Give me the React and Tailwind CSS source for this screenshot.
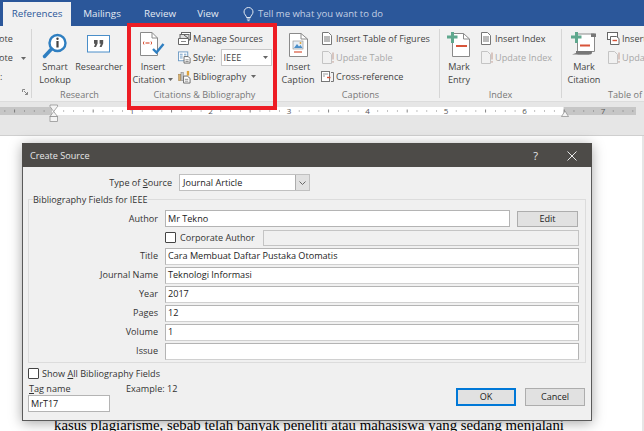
import React from "react";

const font = { fontFamily: '"Open Sans", "Noto Sans", sans-serif' };

const SmartIcon = () => (
  <svg width="26" height="26" viewBox="0 0 26 26">
    <circle cx="15.5" cy="10" r="8" fill="#fff" stroke="#2f7fc1" strokeWidth="2.4" />
    <path d="M9.5 16L2.5 23.5" stroke="#2f7fc1" strokeWidth="3.4" strokeLinecap="round" />
    <circle cx="15.5" cy="5.7" r="1.2" fill="#444" />
    <rect x="14.4" y="8" width="2.2" height="6.5" fill="#444" />
  </svg>
);

const ResearcherIcon = () => (
  <svg width="24" height="18" viewBox="0 0 24 18">
    <rect x="0.5" y="0.5" width="22" height="16.5" fill="#fff" stroke="#4a8ec9" />
    <path d="M7 5h3.6v3.5L9 12H7l1.2-3.2H7ZM12.6 5h3.6v3.5L14.6 12h-2l1.2-3.2h-1.2Z" fill="#555" />
  </svg>
);

const CitationIcon = () => (
  <svg width="28" height="25" viewBox="0 0 28 25">
    <path d="M1.5 0.5H13L18.5 6V23.5H1.5Z" fill="#fff" stroke="#8a8a8a" />
    <path d="M13 0.5V6H18.5" fill="none" stroke="#8a8a8a" />
    <path d="M5 9.5Q3.6 11 5 12.5M12 9.5Q13.4 11 12 12.5" fill="none" stroke="#d8543a" strokeWidth="1" />
    <path d="M6.5 11H10.5" stroke="#d8543a" strokeWidth="1.2" />
    <path d="M14 17L17.5 20.5L24.5 12" fill="none" stroke="#2f7fc1" strokeWidth="2.4" />
  </svg>
);

const ManageIcon = () => (
  <svg width="13" height="13" viewBox="0 0 13 13">
    <rect x="3.5" y="0.5" width="9" height="7" fill="#fff" stroke="#666" />
    <rect x="2" y="2.5" width="9" height="6" fill="#ddd" stroke="#666" />
    <path d="M0.5 6.5H10.5V12.5H0.5Z" fill="#fff" stroke="#666" />
    <path d="M3 9.5H8" stroke="#888" />
    <path d="M6 3L10 6" stroke="#555" />
  </svg>
);

const StyleIcon = () => (
  <svg width="14" height="13" viewBox="0 0 14 13">
    <rect x="0.5" y="0.5" width="10" height="9.5" fill="#fff" stroke="#6d9ac4" />
    <path d="M2 3H5M2 5H5M2 7H5M6.5 3H9M6.5 5H9" stroke="#6d9ac4" />
    <path d="M6.5 5.5H11L13 7.5V12.5H6.5Z" fill="#fff" stroke="#666" />
    <path d="M8 9H11.5M8 10.8H11.5" stroke="#888" />
  </svg>
);

const BibIcon = () => (
  <svg width="14" height="14" viewBox="0 0 14 14">
    <rect x="0.5" y="4" width="2.5" height="7" fill="#d9b26f" stroke="#9a7b45" strokeWidth="0.5" />
    <rect x="3.2" y="2" width="2.5" height="9" fill="#c8c8c8" stroke="#777" strokeWidth="0.5" />
    <rect x="9.5" y="0.5" width="2.5" height="5" fill="#e0a43a" />
    <path d="M6 6H10L13 8.5V13.5H6Z" fill="#fff" stroke="#666" />
    <path d="M7.5 9.5H11M7.5 11.5H11" stroke="#888" />
  </svg>
);

const CaptionIcon = () => (
  <svg width="19" height="24" viewBox="0 0 19 24">
    <path d="M0.5 0.5H12L18.5 6V23.5H0.5Z" fill="#fff" stroke="#8a8a8a" />
    <path d="M12 0.5V6H18.5" fill="none" stroke="#8a8a8a" />
    <rect x="4" y="8" width="10" height="8" fill="#e8eef5" stroke="#888" strokeWidth="0.6" />
    <path d="M5 15L8 11L10 13.5L11.5 12L13.5 15Z" fill="#4a8ec9" />
    <circle cx="11.5" cy="10" r="1" fill="#e0a43a" />
    <path d="M5 19H13" stroke="#d8543a" strokeWidth="1.2" />
  </svg>
);

const ListIcon = ({ disabled }) => {
  const c = disabled ? "#c4c4c4" : "#777";
  return (
    <svg width="13" height="13" viewBox="0 0 13 13">
      <path d="M1.5 0.5H7.5L10.5 3.5V12.5H1.5Z" fill={disabled ? "#f1f1f1" : "#fff"} stroke={c} />
      {disabled ? (
        <path d="M12 1.5V8.5M12 10V11.8" stroke="#c9a9a0" strokeWidth="1.2" />
      ) : (
        <path d="M3 5H9M3 7H9M3 9H9" stroke={c} />
      )}
    </svg>
  );
};

const CrossIcon = () => (
  <svg width="13" height="13" viewBox="0 0 13 13">
    <rect x="0.5" y="1.5" width="8" height="10" fill="#fff" stroke="#777" />
    <path d="M2 4H7M2 6H4" stroke="#999" />
    <path d="M6 7.5H9.5" stroke="#d8543a" strokeWidth="1.4" />
    <path d="M10 2.5H12.5V11.5H10" fill="none" stroke="#777" />
  </svg>
);

const MarkEntryIcon = () => (
  <svg width="25" height="25" viewBox="0 0 25 25">
    <path d="M5.5 1.5H16.5L22.5 7V24.5H5.5Z" fill="#fff" stroke="#8a8a8a" />
    <path d="M16.5 1.5V7H22.5" fill="none" stroke="#8a8a8a" />
    <path d="M4 0H7V3.5H10.5V6.5H7V11H4V6.5H0V3.5H4Z" fill="#5fa88e" />
    <rect x="9" y="13" width="11" height="2" fill="#d8543a" />
  </svg>
);

const MarkCitationIcon = () => (
  <svg width="26" height="25" viewBox="0 0 26 25">
    <path d="M6.5 2H23.5V19.5H18V22H6.5Z" fill="#fff" stroke="#8a8a8a" />
    <path d="M1 22.5H19Q21 22.5 21 20.5V19H5V21Z" fill="#777" />
    <path d="M20 1.5H25V5H20Z" fill="#777" />
    <path d="M4 0H7V3.5H10.5V6.5H7V11H4V6.5H0V3.5H4Z" fill="#5fa88e" />
    <rect x="9" y="12.5" width="10" height="2" fill="#d8543a" />
  </svg>
);

const TableAuthIcon = () => (
  <svg width="13" height="13" viewBox="0 0 13 13">
    <rect x="0.5" y="0.5" width="10" height="7" fill="#fff" stroke="#666" />
    <path d="M3.5 4.5H9.5L12 6.5V12.5H3.5Z" fill="#fff" stroke="#666" />
    <path d="M5.5 8.5H10" stroke="#d8543a" strokeWidth="1.4" />
  </svg>
);

const Caret = () => (
  <svg width="5" height="3" viewBox="0 0 5 3" className="ml-[3px] inline-block shrink-0">
    <path d="M0 0H5L2.5 3Z" fill="#666" />
  </svg>
);

const Sep = () => <div className="w-px h-[69px] bg-[#d6d6d6] shrink-0" />;

const Large = ({ w, icon, lines, caret }) => (
  <div className="flex flex-col items-center shrink-0" style={{ width: w }}>
    <div className="h-[31px] flex items-start justify-center">{icon}</div>
    {lines.map((l, i) => (
      <div key={l} className="h-[13px] leading-[13px] text-[9.1px] text-[#444] whitespace-nowrap flex items-center">
        {l}
        {caret && i === lines.length - 1 ? <Caret /> : null}
      </div>
    ))}
  </div>
);

const Small = ({ icon, label, disabled, caret }) => (
  <div className={`h-[19px] flex items-center gap-[2px] text-[9.1px] whitespace-nowrap ${disabled ? "text-[#a8a8a8]" : "text-[#444]"}`}>
    <span className="w-[13px] h-[14px] flex items-center justify-center shrink-0">{icon}</span>
    {label}
    {caret ? <Caret /> : null}
  </div>
);

const Group = ({ width, label, labelPad = 0, children }) => (
  <div className="shrink-0 flex flex-col h-[72px]" style={{ width }}>
    <div className="h-[60px] flex">{children}</div>
    <div className="h-[12px] leading-[12px] text-[9.1px] text-[#777] text-center whitespace-nowrap" style={{ paddingLeft: labelPad }}>
      {label}
    </div>
  </div>
);

const Ruler = () => {
  const nums = [1, 2, 3, 4, 5, 6, 7];
  const inch = 78.5;
  const zero = 53.5;
  const ticks = [];
  for (let n = -6; n < 64; n++) ticks.push(n);
  return (
    <svg width="644" height="21" viewBox="0 0 644 21" className="block">
      <rect x="0" y="5" width="52" height="8" fill="#c6c6c6" />
      <rect x="52" y="5" width="511" height="8" fill="#fff" />
      <rect x="564" y="5" width="72" height="8" fill="#c6c6c6" />
      {ticks.map((n) => {
        const x = zero + (n * inch) / 8;
        if (n % 8 === 0 || x > 636) return null;
        if (n % 4 === 0) return <rect key={n} x={x} y="7.5" width="0.8" height="3" fill="#666" />;
        return <rect key={n} x={x} y="8.5" width="0.8" height="1" fill="#666" />;
      })}
      {nums.map((n) => (
        <text key={n} x={zero + n * inch} y="12" textAnchor="middle" fontSize="8" fill="#555" fontFamily="Open Sans, sans-serif">
          {n}
        </text>
      ))}
      <path d="M50 3H57.5V4.5L53.7 9.5L50 4.5Z" fill="#f4f4f4" stroke="#888" strokeWidth="0.7" />
      <path d="M53.7 9.5L57.5 14.5H50Z" fill="#f4f4f4" stroke="#888" strokeWidth="0.7" />
      <rect x="50" y="14.5" width="7.5" height="5" fill="#f4f4f4" stroke="#888" strokeWidth="0.7" />
      <path d="M565 9L568.5 14.5H561.5Z" fill="#f4f4f4" stroke="#888" strokeWidth="0.7" />
    </svg>
  );
};

const Field = ({ label, value }) => (
  <div className="flex items-center h-[17px] mb-[2px]">
    <div className="w-[129px] pb-[1px] text-right text-[9.1px] text-[#333] whitespace-nowrap">{label}</div>
    <div className="ml-[7px] w-[414px] h-[17px] pb-[1px] bg-white border border-[#b4b4b4] border-b-[#d0d0d0] flex items-center pl-[2px] text-[9.1px] text-[#222]">
      {value}
    </div>
  </div>
);

const Box = () => <div className="w-[11px] h-[11px] bg-white border border-[#444] rounded-[1px] shrink-0" />;

export default function App() {
  return (
    <div className="relative w-[644px] h-[431px] overflow-hidden bg-[#e6e6e6]" style={font}>
      {/* title tabs */}
      <div className="h-[26px] bg-[#2b579a] flex items-end text-[9.8px] text-[#e4eaf3] whitespace-nowrap">
        <div className="ml-[3px] w-[68px] h-[24px] bg-[#f1f1f1] text-[#2b579a] flex items-center justify-center">References</div>
        <div className="w-[62px] h-[24px] flex items-center justify-center">Mailings</div>
        <div className="w-[54px] h-[24px] flex items-center justify-center">Review</div>
        <div className="w-[42px] h-[24px] flex items-center justify-center">View</div>
        <div className="ml-[14px] h-[24px] flex items-center text-[#c3d0e4] text-[9.5px]">
          <svg width="11" height="15" viewBox="0 0 11 15" className="mr-[4px]">
            <path d="M3.5 10.5C3.5 8.5 1 7.5 1 5A4.5 4.5 0 0 1 10 5C10 7.5 7.5 8.5 7.5 10.5Z" fill="none" stroke="#e4eaf3" strokeWidth="1" />
            <path d="M3.8 12H7.2M4.5 13.7H6.5" stroke="#e4eaf3" />
          </svg>
          Tell me what you want to do
        </div>
      </div>

      {/* ribbon */}
      <div className="h-[75px] bg-[#f1f1f1] pt-[3px] flex overflow-hidden">
        <div className="w-[31px] shrink-0 flex flex-col relative">
          <div className="h-[19px] flex items-center text-[9.1px] text-[#444] -ml-[1px]">ote</div>
          <div className="h-[19px] flex items-center text-[9.1px] text-[#444] -ml-[1px]">
            ote <span className="ml-[5px]"><Caret /></span>
          </div>
          <div className="h-[19px] flex items-center text-[9.1px] text-[#444]">:</div>
          <svg width="6" height="6" viewBox="0 0 6 6" className="ml-[22px] mt-[3px]">
            <path d="M0.5 0.5H3M0.5 0.5V3" stroke="#888" />
            <path d="M2 2L5.5 5.5M5.5 3V5.5H3" stroke="#888" fill="none" />
          </svg>
        </div>
        <Sep />
        <Group width={95} label="Research">
          <div className="w-[1px]" />
          <Large w={44} icon={<div className="pt-[4px]"><SmartIcon /></div>} lines={["Smart", "Lookup"]} />
          <Large w={44} icon={<div className="pt-[6px]"><ResearcherIcon /></div>} lines={["Researcher"]} />
        </Group>
        <Group width={155} label="Citations & Bibliography">
          <div className="w-[4px]" />
          <Large w={44} icon={<div className="pt-[3px]"><CitationIcon /></div>} lines={["Insert", "Citation"]} caret />
          <div className="ml-[3px] flex flex-col">
            <Small icon={<ManageIcon />} label="Manage Sources" />
            <div className="h-[19px] flex items-center gap-[2px] text-[9.1px] text-[#444]">
              <span className="w-[13px] flex items-center justify-center"><StyleIcon /></span>
              Style:
              <div className="w-[51px] h-[17px] ml-[3px] bg-white border border-[#c8c8c8] flex items-center justify-between pl-[2px] pr-[3px]">
                IEEE
                <Caret />
              </div>
            </div>
            <Small icon={<BibIcon />} label="Bibliography" caret />
          </div>
        </Group>
        <Group width={157} label="Captions">
          <Large w={32} icon={<div className="pt-[4px]"><CaptionIcon /></div>} lines={["Insert", "Caption"]} />
          <div className="ml-[7px] flex flex-col">
            <Small icon={<ListIcon />} label="Insert Table of Figures" />
            <Small icon={<ListIcon disabled />} label="Update Table" disabled />
            <Small icon={<CrossIcon />} label="Cross-reference" />
          </div>
        </Group>
        <Sep />
        <Group width={121} label="Index">
          <Large w={38} icon={<div className="pt-[3px]"><MarkEntryIcon /></div>} lines={["Mark", "Entry"]} />
          <div className="ml-[2px] flex flex-col">
            <Small icon={<ListIcon />} label="Insert Index" />
            <Small icon={<ListIcon disabled />} label="Update Index" disabled />
          </div>
        </Group>
        <Sep />
        <Group width={90} label="Table of" labelPad={36}>
          <Large w={44} icon={<div className="pt-[3px]"><MarkCitationIcon /></div>} lines={["Mark", "Citation"]} />
          <div className="ml-[1px] flex flex-col">
            <Small icon={<TableAuthIcon />} label="Insert" />
            <Small icon={<ListIcon disabled />} label="Update" disabled />
          </div>
        </Group>
      </div>

      {/* ruler band */}
      <div className="h-[35px] bg-[#e6e6e6] border-t border-[#dcdcdc] border-b border-b-[#cfcfcf]">
        <Ruler />
      </div>

      {/* page */}
      <div className="relative w-[642px] h-[295px] bg-white">
        <div className="pt-[281px] pl-[54px] text-[14.8px] leading-[16px] text-black whitespace-nowrap" style={{ fontFamily: '"Liberation Serif", serif' }}>
          kasus plagiarisme, sebab telah banyak peneliti atau mahasiswa yang sedang menjalani
        </div>
      </div>

      {/* dialog */}
      <div className="absolute left-[22px] top-[143px] w-[570px] h-[278px] bg-[#f0f0f0] border border-[#5a5a5a] border-t-0 shadow-[0_2px_12px_rgba(0,0,0,0.35)]">
        <div className="h-[24px] bg-[#4d4b48] -mx-px flex items-center justify-between text-[9.1px] text-[#e8e8e8] pl-[8px] pt-[2px]">
          <span>Create Source</span>
          <div className="flex items-center">
            <span className="text-[11px] mr-[29px]">?</span>
            <svg width="10" height="10" viewBox="0 0 10 10" className="mr-[15px]">
              <path d="M0.5 0.5L9.5 9.5M9.5 0.5L0.5 9.5" stroke="#e8e8e8" strokeWidth="1" />
            </svg>
          </div>
        </div>

        <div className="pt-[7px] flex items-center h-[24px]">
          <div className="w-[149px] text-right text-[9.1px] text-[#333] whitespace-nowrap">
            Type of <u>S</u>ource
          </div>
          <div className="ml-[7px] w-[131px] h-[17px] bg-white border border-[#c0c0c0] flex items-center justify-between pl-[3px] text-[9.1px] text-[#222]">
            Journal Article
            <div className="w-[14px] h-full bg-[#e1e1e1] border-l border-[#adadad] flex items-center justify-center">
              <svg width="7" height="4" viewBox="0 0 7 4"><path d="M0.5 0.5L3.5 3.5L6.5 0.5" fill="none" stroke="#666" /></svg>
            </div>
          </div>
        </div>

        <div className="relative mt-[8px] ml-[5px] w-[558px] h-[164px] border border-[#dcdcdc] pt-[10px]">
          <div className="absolute -top-[7px] left-[4px] bg-[#f0f0f0] text-[9.1px] leading-[13px] text-[#333] whitespace-nowrap">Bibliography Fields for IEEE</div>
          <div className="flex items-center h-[17px] mb-[2px]">
            <div className="w-[129px] text-right text-[9.1px] text-[#333]">Author</div>
            <div className="ml-[7px] w-[345px] h-[17px] bg-white border border-[#b4b4b4] flex items-center pl-[2px] text-[9.1px] text-[#222]">Mr Tekno</div>
            <div className="ml-[7px] w-[61px] h-[16px] bg-[#e1e1e1] border border-[#adadad] flex items-center justify-center text-[9.1px] text-[#222]">Edit</div>
          </div>
          <div className="flex items-center h-[17px] mb-[2px]">
            <div className="ml-[136px]"><Box /></div>
            <div className="ml-[4px] w-[83px] text-[9.1px] text-[#333] whitespace-nowrap">Corporate Author</div>
            <div className="w-[316px] h-[16px] bg-[#f0f0f0] border border-[#c4c4c4]" />
          </div>
          <Field label="Title" value="Cara Membuat Daftar Pustaka Otomatis" />
          <Field label="Journal Name" value="Teknologi Informasi" />
          <Field label="Year" value="2017" />
          <Field label="Pages" value="12" />
          <Field label="Volume" value="1" />
          <Field label="Issue" value="" />
        </div>

        <div className="mt-[5px] ml-[5px] flex items-center gap-[3px] text-[9.1px] text-[#333] h-[11px]">
          <Box />
          <span>Show <u>A</u>ll Bibliography Fields</span>
        </div>
        <div className="flex justify-between items-start">
          <div className="ml-[5px]">
            <div className="mt-[3px] flex text-[9.1px] leading-[13px] text-[#333]">
              <span className="w-[98px] pl-[1px]"><u>T</u>ag name</span>
              <span>Example: 12</span>
            </div>
            <div className="w-[82px] h-[17px] bg-white border border-[#b4b4b4] flex items-center pl-[2px] text-[9.1px] text-[#222]">MrT17</div>
          </div>
          <div className="mt-[9px] mr-[6px] flex gap-[9px]">
            <div className="w-[60px] h-[18px] bg-[#e1e1e1] border-2 border-[#0078d7] flex items-center justify-center text-[9.1px] text-[#222]">OK</div>
            <div className="w-[60px] h-[18px] bg-[#e1e1e1] border border-[#adadad] flex items-center justify-center text-[9.1px] text-[#222]">Cancel</div>
          </div>
        </div>
      </div>

      {/* red highlight frame */}
      <div className="absolute left-[127px] top-[23px] w-[150px] h-[87px] border-[4px] border-[#ed1c24]" />
    </div>
  );
}
